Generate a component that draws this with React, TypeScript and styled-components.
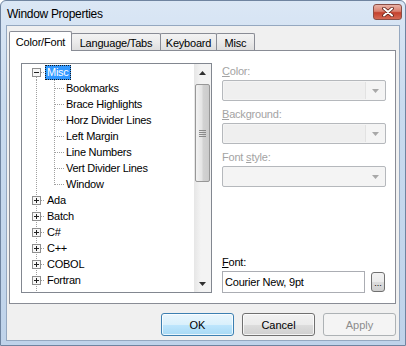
import React from 'react';
import styled, { createGlobalStyle } from 'styled-components';

type NodeKind = 'open' | 'child' | 'lastChild' | 'closed' | 'tail';

interface TreeNode {
  label: string;
  kind: NodeKind;
  selected?: boolean;
}

const treeNodes: TreeNode[] = [
  { label: 'Misc', kind: 'open', selected: true },
  { label: 'Bookmarks', kind: 'child' },
  { label: 'Brace Highlights', kind: 'child' },
  { label: 'Horz Divider Lines', kind: 'child' },
  { label: 'Left Margin', kind: 'child' },
  { label: 'Line Numbers', kind: 'child' },
  { label: 'Vert Divider Lines', kind: 'child' },
  { label: 'Window', kind: 'lastChild' },
  { label: 'Ada', kind: 'closed' },
  { label: 'Batch', kind: 'closed' },
  { label: 'C#', kind: 'closed' },
  { label: 'C++', kind: 'closed' },
  { label: 'COBOL', kind: 'closed' },
  { label: 'Fortran', kind: 'closed' },
  { label: '', kind: 'tail' },
];

const tabs = [
  { label: 'Color/Font', width: 63, active: true },
  { label: 'Language/Tabs', width: 90, active: false },
  { label: 'Keyboard', width: 57, active: false },
  { label: 'Misc', width: 39, active: false },
];

const GlobalStyle = createGlobalStyle`
  html, body {
    margin: 0;
    padding: 0;
    background: #ffffff;
  }
  body {
    font-family: 'Liberation Sans', Arial, sans-serif;
    font-size: 11px;
    color: #000000;
  }
  * {
    box-sizing: border-box;
  }
`;

const Frame = styled.div`
  width: 406px;
  height: 346px;
  display: flex;
  flex-direction: column;
  border: 1px solid #6f84a0;
  border-radius: 6px 6px 0 0;
  overflow: hidden;
  background: linear-gradient(180deg, #dbe7f5 0%, #c9dbef 30%, #bfd3ea 100%);
`;

const TitleBar = styled.div`
  height: 24px;
  flex: none;
  display: flex;
  align-items: center;
  justify-content: space-between;
  padding: 0 3px 0 6px;
`;

const TitleText = styled.div`
  font-size: 12px;
  letter-spacing: -0.3px;
  color: #000000;
  padding-top: 1px;
`;

const CloseButton = styled.div`
  width: 29px;
  height: 16px;
  margin-top: -3px;
  display: flex;
  align-items: center;
  justify-content: center;
  border: 1px solid #8a4e46;
  border-radius: 3px;
  background: linear-gradient(180deg, #eab3a6 0%, #d98070 45%, #c4412d 55%, #d66a55 100%);
`;

const Client = styled.div`
  flex: 1;
  margin: 0 5px 4px 5px;
  display: flex;
  flex-direction: column;
  padding: 5px 3px 0 2px;
  background: #f0f0f0;
  border: 1px solid #95a8c0;
`;

const TabStrip = styled.div`
  height: 20px;
  margin-bottom: -1px;
  display: flex;
  align-items: flex-end;
`;

const Tab = styled.div<{ $active: boolean; $w: number }>`
  position: relative;
  z-index: ${(p) => (p.$active ? 2 : 1)};
  width: ${(p) => p.$w}px;
  height: ${(p) => (p.$active ? 20 : 17)}px;
  margin-bottom: ${(p) => (p.$active ? 0 : 1)}px;
  margin-left: ${(p) => (p.$active ? 0 : -1)}px;
  display: flex;
  align-items: center;
  justify-content: center;
  padding-top: ${(p) => (p.$active ? 0 : 1)}px;
  border: 1px solid #898c95;
  border-bottom: none;
  border-radius: 2px 2px 0 0;
  letter-spacing: -0.2px;
  background: ${(p) =>
    p.$active ? '#ffffff' : 'linear-gradient(180deg, #f3f3f3 0%, #ebebeb 50%, #dedede 100%)'};
  &:first-child {
    margin-left: 0;
  }
`;

const TabPanel = styled.div`
  height: 254px;
  display: flex;
  padding: 12px 0 0 11px;
  background: #ffffff;
  border: 1px solid #898c95;
`;

const TreeBox = styled.div`
  width: 191px;
  height: 230px;
  display: flex;
  border: 1px solid #828790;
  background: #ffffff;
`;

const TreeList = styled.div`
  flex: 1;
  overflow: hidden;
`;

const TreeRow = styled.div`
  height: 16px;
  display: flex;
  align-items: center;
  white-space: nowrap;
`;

const NodeLabel = styled.span<{ $selected?: boolean }>`
  line-height: 13px;
  padding: 0 1px;
  letter-spacing: -0.25px;
  border: 1px ${(p) => (p.$selected ? 'dotted #1a1a1a' : 'solid transparent')};
  background: ${(p) => (p.$selected ? '#3399ff' : 'transparent')};
  color: ${(p) => (p.$selected ? '#ffffff' : '#000000')};
`;

const ScrollBar = styled.div`
  width: 17px;
  display: flex;
  flex-direction: column;
  background: linear-gradient(90deg, #e6e6e6 0%, #f3f3f3 40%, #f3f3f3 100%);
`;

const ScrollButton = styled.div`
  height: 17px;
  display: flex;
  align-items: center;
  justify-content: center;
`;

const ScrollTrack = styled.div`
  flex: 1;
  padding: 3px 1px 0 1px;
`;

const ScrollThumb = styled.div`
  height: 98px;
  display: flex;
  align-items: center;
  justify-content: center;
  border: 1px solid #979797;
  border-radius: 2px;
  background: linear-gradient(90deg, #f2f2f2 0%, #e4e4e4 45%, #d2d2d2 55%, #cbcbcb 100%);
`;

const SideColumn = styled.div`
  width: 164px;
  height: 230px;
  margin-left: 10px;
  display: flex;
  flex-direction: column;
`;

const FieldLabel = styled.div<{ $disabled?: boolean; $first?: boolean }>`
  line-height: 13px;
  margin-top: ${(p) => (p.$first ? 2 : 7)}px;
  margin-bottom: 2px;
  letter-spacing: -0.2px;
  color: ${(p) => (p.$disabled ? '#a3a3a3' : '#000000')};
`;

const Combo = styled.div`
  height: 21px;
  display: flex;
  border: 1px solid #b5b8bc;
  border-radius: 2px;
  background: #f4f4f4;
`;

const ComboField = styled.div<{ $split: boolean }>`
  flex: 1;
  margin: 1px 0 1px 1px;
  background: ${(p) => (p.$split ? '#efefef' : '#f4f4f4')};
  border-right: 1px solid ${(p) => (p.$split ? '#e2e2e2' : 'transparent')};
`;

const ComboArrow = styled.div`
  width: 19px;
  display: flex;
  align-items: center;
  justify-content: center;
`;

const FontGroup = styled.div`
  margin-top: auto;
  display: flex;
  flex-direction: column;
`;

const FontRow = styled.div`
  display: flex;
  align-items: center;
`;

const TextBox = styled.div`
  width: 143px;
  height: 22px;
  display: flex;
  align-items: center;
  padding-left: 2px;
  border: 1px solid #abadb3;
  background: #ffffff;
  letter-spacing: -0.2px;
`;

const BrowseButton = styled.div`
  width: 14px;
  height: 20px;
  margin-left: 6px;
  display: flex;
  align-items: flex-end;
  justify-content: center;
  padding-bottom: 3px;
  font-size: 9px;
  line-height: 9px;
  border: 1px solid #707070;
  border-radius: 3px;
  background: linear-gradient(180deg, #f2f2f2 0%, #ebebeb 50%, #dddddd 51%, #cfcfcf 100%);
`;

const ButtonRow = styled.div`
  margin-top: 9px;
  display: flex;
  justify-content: flex-end;
  gap: 8px;
`;

type ButtonTone = 'default' | 'normal' | 'disabled';

const DialogButton = styled.div<{ $tone: ButtonTone }>`
  width: 73px;
  height: 23px;
  display: flex;
  align-items: center;
  justify-content: center;
  border-radius: 3px;
  border: 1px solid
    ${(p) => (p.$tone === 'default' ? '#3c7fb1' : p.$tone === 'normal' ? '#707070' : '#adb2b5')};
  color: ${(p) => (p.$tone === 'disabled' ? '#8c8c8c' : '#000000')};
  box-shadow: ${(p) => (p.$tone === 'disabled' ? 'none' : 'inset 0 0 0 1px rgba(255,255,255,0.75)')};
  background: ${(p) =>
    p.$tone === 'default'
      ? 'linear-gradient(180deg, #eaf6fd 0%, #d9f0fc 50%, #bee6fd 51%, #a7d9f5 100%)'
      : p.$tone === 'normal'
      ? 'linear-gradient(180deg, #f2f2f2 0%, #ebebeb 50%, #dddddd 51%, #cfcfcf 100%)'
      : '#f4f4f4'};
`;

const TreeLines: React.FC<{ kind: NodeKind }> = ({ kind }) => {
  const dot = { stroke: '#a0a0a0', strokeWidth: 1, strokeDasharray: '1 1' };
  const isChild = kind === 'child' || kind === 'lastChild';
  const hasBox = kind === 'open' || kind === 'closed';
  const width = isChild || kind === 'tail' ? (isChild ? 42 : 23) : 23;
  return (
    <svg width={width} height={16} style={{ flex: 'none', display: 'block' }}>
      <line x1={14.5} y1={kind === 'open' ? 13 : 0} x2={14.5} y2={16} {...dot} />
      {isChild && (
        <>
          <line x1={32.5} y1={0} x2={32.5} y2={kind === 'lastChild' ? 9 : 16} {...dot} />
          <line x1={33} y1={8.5} x2={42} y2={8.5} {...dot} />
        </>
      )}
      {hasBox && (
        <>
          <line x1={19} y1={8.5} x2={23} y2={8.5} {...dot} />
          <rect x={10.5} y={4.5} width={8} height={8} fill="#f7f7f7" stroke="#8f8f8f" />
          <line x1={12} y1={8.5} x2={17} y2={8.5} stroke="#222" />
          {kind === 'closed' && <line x1={14.5} y1={6} x2={14.5} y2={11} stroke="#222" />}
        </>
      )}
    </svg>
  );
};

const SmallArrow: React.FC<{ up?: boolean; color: string }> = ({ up, color }) => (
  <svg width={7} height={4}>
    <path d={up ? 'M0 4 L3.5 0 L7 4 Z' : 'M0 0 L7 0 L3.5 4 Z'} fill={color} />
  </svg>
);

const App: React.FC = () => {
  return (
    <>
      <GlobalStyle />
      <Frame>
        <TitleBar>
          <TitleText>Window Properties</TitleText>
          <CloseButton>
            <svg width={12} height={10}>
              <path d="M2 1.5 L10 8.5 M10 1.5 L2 8.5" stroke="#5b1f16" strokeWidth={3.6} strokeLinecap="round" />
              <path d="M2 1.5 L10 8.5 M10 1.5 L2 8.5" stroke="#ffffff" strokeWidth={2} strokeLinecap="round" />
            </svg>
          </CloseButton>
        </TitleBar>
        <Client>
          <TabStrip>
            {tabs.map((t) => (
              <Tab key={t.label} $active={t.active} $w={t.width}>
                {t.label}
              </Tab>
            ))}
          </TabStrip>
          <TabPanel>
            <TreeBox>
              <TreeList>
                {treeNodes.map((n, i) => (
                  <TreeRow key={i}>
                    <TreeLines kind={n.kind} />
                    {n.label && <NodeLabel $selected={n.selected}>{n.label}</NodeLabel>}
                  </TreeRow>
                ))}
              </TreeList>
              <ScrollBar>
                <ScrollButton>
                  <SmallArrow up color="#303030" />
                </ScrollButton>
                <ScrollTrack>
                  <ScrollThumb>
                    <svg width={7} height={7}>
                      <path d="M0 0.5 H7 M0 2.5 H7 M0 4.5 H7 M0 6.5 H7" stroke="#8a8a8a" />
                    </svg>
                  </ScrollThumb>
                </ScrollTrack>
                <ScrollButton>
                  <SmallArrow color="#303030" />
                </ScrollButton>
              </ScrollBar>
            </TreeBox>
            <SideColumn>
              <FieldLabel $disabled $first>
                <u>C</u>olor:
              </FieldLabel>
              <Combo>
                <ComboField $split />
                <ComboArrow>
                  <SmallArrow color="#a8a8a8" />
                </ComboArrow>
              </Combo>
              <FieldLabel $disabled>
                <u>B</u>ackground:
              </FieldLabel>
              <Combo>
                <ComboField $split />
                <ComboArrow>
                  <SmallArrow color="#a8a8a8" />
                </ComboArrow>
              </Combo>
              <FieldLabel $disabled>
                Font <u>s</u>tyle:
              </FieldLabel>
              <Combo>
                <ComboField $split={false} />
                <ComboArrow>
                  <SmallArrow color="#a8a8a8" />
                </ComboArrow>
              </Combo>
              <FontGroup>
                <FieldLabel>
                  <u>F</u>ont:
                </FieldLabel>
                <FontRow>
                  <TextBox>Courier New, 9pt</TextBox>
                  <BrowseButton>...</BrowseButton>
                </FontRow>
              </FontGroup>
            </SideColumn>
          </TabPanel>
          <ButtonRow>
            <DialogButton $tone="default">OK</DialogButton>
            <DialogButton $tone="normal">Cancel</DialogButton>
            <DialogButton $tone="disabled">Apply</DialogButton>
          </ButtonRow>
        </Client>
      </Frame>
    </>
  );
};

export default App;
